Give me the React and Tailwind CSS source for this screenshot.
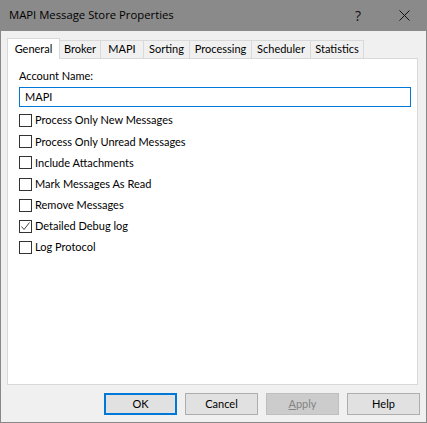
import React from "react";

const items = [
  ["Process Only New Messages", false],
  ["Process Only Unread Messages", false],
  ["Include Attachments", false],
  ["Mark Messages As Read", false],
  ["Remove Messages", false],
  ["Detailed Debug log", true],
  ["Log Protocol", false],
];

const tabs = ["General", "Broker", "MAPI", "Sorting", "Processing", "Scheduler", "Statistics"];
const tabW = [52, 41, 43, 46, 62, 59, 53];

function Check({ checked }) {
  return (
    <div className="w-[13px] h-[13px] border border-[#333333] bg-white flex items-center justify-center shrink-0">
      {checked && (
        <svg width="11" height="11" viewBox="0 0 11 11">
          <polyline points="1.5,5.5 4,8.5 9.5,1.5" fill="none" stroke="#444" strokeWidth="1" />
        </svg>
      )}
    </div>
  );
}

function Btn({ children, primary, disabled }) {
  const cls = primary
    ? "border-2 border-[#0078d7] bg-[#e1e1e1] text-black"
    : disabled
    ? "border border-[#bfbfbf] bg-[#cccccc] text-[#838383]"
    : "border border-[#adadad] bg-[#e1e1e1] text-black";
  return (
    <div className={`w-[73px] h-[22px] flex items-center justify-center ${cls}`}>{children}</div>
  );
}

export default function App() {
  return (
    <div
      className="w-[427px] h-[423px] bg-[#f0f0f0] border-l border-r border-b border-[#888888] flex flex-col text-[11px] text-black"
      style={{ fontFamily: 'Lato, "Liberation Sans", sans-serif' }}
    >
      <div className="h-[31px] bg-[#8a8a8a] flex items-center shrink-0 -mx-px">
        <div className="pl-[9px] text-[11.3px] text-black flex-1" style={{ fontFamily: '"Open Sans", "Liberation Sans", sans-serif' }}>
          MAPI Message Store Properties
        </div>
        <div className="w-[46px] text-center text-[14px] text-[#111]" style={{ fontFamily: '"Open Sans", sans-serif' }}>?</div>
        <div className="w-[46px] flex justify-center">
          <svg width="11" height="11" viewBox="0 0 11 11">
            <path d="M0.5 0.5 L10.5 10.5 M10.5 0.5 L0.5 10.5" stroke="#111" strokeWidth="1" />
          </svg>
        </div>
      </div>
      <div className="flex flex-col pl-[6px] pr-[8px] pt-[7px]">
        <div className="flex items-end h-[21px] relative z-10 -mb-px">
          {tabs.map((t, i) =>
            i === 0 ? (
              <div
                key={t}
                className="h-[21px] bg-white border border-b-0 border-[#d9d9d9] flex items-start pt-[2px] justify-center"
                style={{ width: tabW[i] + 1 }}
              >
                {t}
              </div>
            ) : (
              <div
                key={t}
                className="h-[19px] bg-[#f0f0f0] border border-[#d9d9d9] -ml-px flex items-center justify-center"
                style={{ width: tabW[i] + 1 }}
              >
                {t}
              </div>
            )
          )}
        </div>
        <div className="h-[327px] bg-white border border-[#d9d9d9] pt-[10px] pl-[11px] pr-[6px] flex flex-col">
          <div className="h-[14px] leading-[14px]">Account Name:</div>
          <div className="mt-[4px] h-[20px] border border-[#0078d7] flex items-center pl-[5px]">MAPI</div>
          <div className="mt-[3px] flex flex-col">
            {items.map(([label, c]) => (
              <div key={label} className="h-[21.2px] flex items-center gap-[3px]">
                <Check checked={c} />
                <span>{label}</span>
              </div>
            ))}
          </div>
        </div>
        <div className="flex justify-end gap-[8px] mt-[8px] mr-[-2px]">
          <Btn primary>OK</Btn>
          <Btn>Cancel</Btn>
          <Btn disabled>
            <span><span className="underline">A</span>pply</span>
          </Btn>
          <Btn>Help</Btn>
        </div>
      </div>
    </div>
  );
}
